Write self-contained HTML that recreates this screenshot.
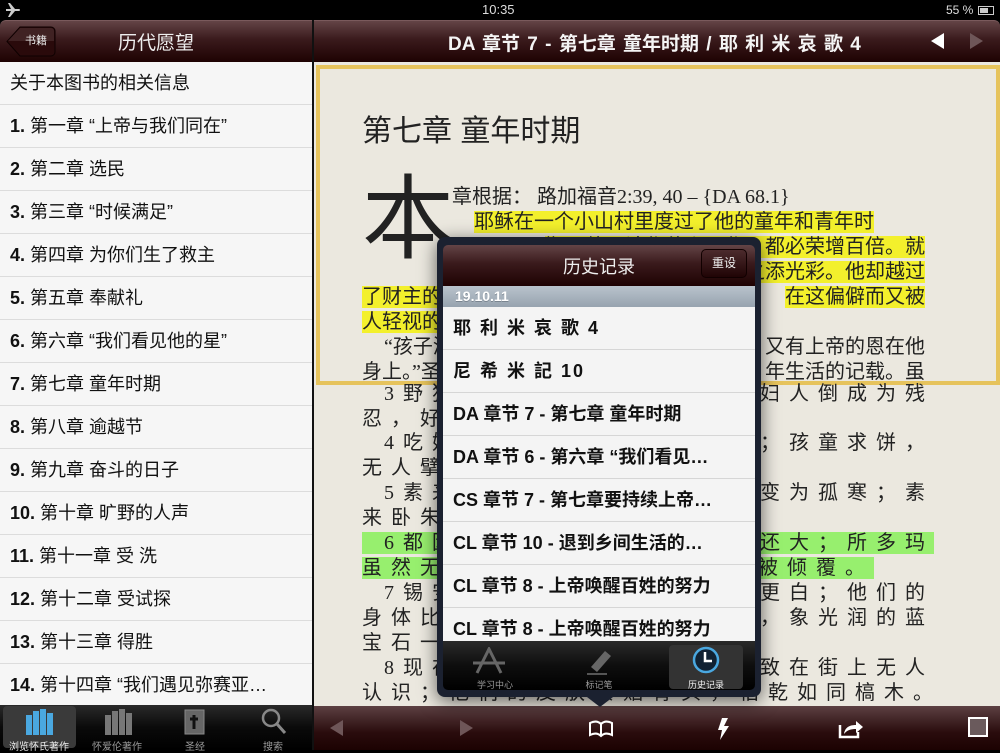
<!DOCTYPE html>
<html><head><meta charset="utf-8">
<style>
*{margin:0;padding:0;box-sizing:border-box}
body{width:1000px;height:750px;overflow:hidden;background:#000;font-family:"Liberation Sans","Noto Sans CJK SC",sans-serif;position:relative}
.abs{position:absolute}
.status{left:0;top:0;width:1000px;height:20px;background:#000;color:#ddd;font-size:13px}
.hdr{top:20px;height:42px;background:linear-gradient(#634446,#3a1a1c 45%,#1e0202);border-top:1px solid #7a5a5c}
.left{left:0;top:62px;width:312px;height:643px;background:#f6f6f6}
.row{position:absolute;left:0;width:312px;height:43px;border-bottom:1px solid #dcdcdc;font-size:18px;color:#111;padding-left:10px;line-height:42px;white-space:nowrap}
.content{left:314px;top:62px;width:686px;height:644px;background:#ebe8df}
.t{position:absolute;font-size:20px;color:#222;white-space:nowrap;font-family:"Liberation Serif","Noto Sans CJK SC",sans-serif;line-height:24px}
.y{background:#f3f02c}
.g{background:#97ef6e}
.sp{letter-spacing:9px}
.r{right:75px}
.sp.r{right:66px}
.tb{left:314px;top:706px;width:686px;height:44px;background:linear-gradient(#5c4042,#2a0c0d 60%,#1c0202)}
.ltab{left:0;top:705px;width:312px;height:45px;background:linear-gradient(#2a2a2a,#0a0a0a 50%,#000)}
.tl{position:absolute;font-size:10px;color:#999;width:78px;text-align:center;top:33px}
.pop{left:437px;top:237px;width:324px;height:460px;background:#1b2130;border-radius:8px;box-shadow:0 4px 18px rgba(0,0,0,.6)}
.pr{position:absolute;left:6px;width:312px;height:43px;background:#f4f4f4;border-bottom:1px solid #d6d6d6;font-size:18px;font-weight:bold;color:#111;padding-left:10px;line-height:42px;white-space:nowrap}
</style></head><body>
<div class="abs status">
<svg class="abs" style="left:5px;top:3px" width="16" height="14" viewBox="0 0 16 14"><path d="M1 6h5L3 0h2l5 6h4a1 1 0 010 2h-4l-5 6H3l3-6H1z" fill="#ccc"/></svg>
<div class="abs" style="left:482px;top:2px;font-size:13px">10:35</div>
<div class="abs" style="left:946px;top:3px;font-size:12px">55 %</div>
<div class="abs" style="left:978px;top:6px;width:16px;height:9px;border:1px solid #ccc"><div style="width:8px;height:5px;margin:1px;background:#ccc"></div></div>
</div>
<div class="abs hdr" style="left:0;width:312px;border-top-left-radius:6px"></div>
<svg class="abs" style="left:6px;top:26px" width="50" height="31"><path d="M14 1H45a4 4 0 014 4v21a4 4 0 01-4 4H14L1 15.5z" fill="#2a0a0b" stroke="#0e0000"/><path d="M14 2H45a3 3 0 013 3v10H2z" fill="#4a2c2e" opacity=".7"/></svg>
<div class="abs" style="left:18px;top:27px;width:36px;height:29px;color:#eee;font-size:11px;line-height:29px;text-align:center">书籍</div>
<div class="abs" style="left:0;width:312px;top:28px;text-align:center;color:#eee;font-size:19px">历代愿望</div>
<div class="abs hdr" style="left:314px;width:686px;border-top-right-radius:6px"></div>
<div class="abs" style="left:448px;top:29px;color:#f4f4f4;font-size:19px;font-weight:bold;white-space:nowrap;word-spacing:2px">DA 章节 7 - 第七章 童年时期 / 耶 利 米 哀 歌 4</div>
<div class="abs" style="left:931px;top:33px;width:0;height:0;border-top:8px solid transparent;border-bottom:8px solid transparent;border-right:13px solid #fff"></div>
<div class="abs" style="left:970px;top:33px;width:0;height:0;border-top:8px solid transparent;border-bottom:8px solid transparent;border-left:13px solid #6e5658"></div>
<div class="abs" style="left:312px;top:20px;width:2px;height:730px;background:#111"></div>

<div class="abs left">
<div class="row" style="top:0">关于本图书的相关信息</div>
<div class="row" style="top:43px"><b>1.</b> 第一章 “上帝与我们同在”</div>
<div class="row" style="top:86px"><b>2.</b> 第二章 选民</div>
<div class="row" style="top:129px"><b>3.</b> 第三章 “时候满足”</div>
<div class="row" style="top:172px"><b>4.</b> 第四章 为你们生了救主</div>
<div class="row" style="top:215px"><b>5.</b> 第五章 奉献礼</div>
<div class="row" style="top:258px"><b>6.</b> 第六章 “我们看见他的星”</div>
<div class="row" style="top:301px"><b>7.</b> 第七章 童年时期</div>
<div class="row" style="top:344px"><b>8.</b> 第八章 逾越节</div>
<div class="row" style="top:387px"><b>9.</b> 第九章 奋斗的日子</div>
<div class="row" style="top:430px"><b>10.</b> 第十章 旷野的人声</div>
<div class="row" style="top:473px"><b>11.</b> 第十一章 受 洗</div>
<div class="row" style="top:516px"><b>12.</b> 第十二章 受试探</div>
<div class="row" style="top:559px"><b>13.</b> 第十三章 得胜</div>
<div class="row" style="top:602px;border:0"><b>14.</b> 第十四章 “我们遇见弥赛亚…</div>
</div>

<div class="abs ltab">
<div class="abs" style="left:3px;top:1px;width:73px;height:42px;background:#3a3a3a;border-radius:4px"></div>
<svg class="abs" style="left:25px;top:4px" width="30" height="26"><g fill="#4aa8e0"><rect x="1" y="6" width="6" height="20"/><rect x="8" y="2" width="6" height="24"/><rect x="15" y="0" width="6" height="26"/><rect x="22" y="4" width="6" height="22"/></g></svg>
<svg class="abs" style="left:104px;top:4px" width="30" height="26"><g fill="#777"><rect x="1" y="6" width="6" height="20"/><rect x="8" y="2" width="6" height="24"/><rect x="15" y="0" width="6" height="26"/><rect x="22" y="4" width="6" height="22"/></g></svg>
<svg class="abs" style="left:184px;top:4px" width="22" height="26"><rect x="1" y="1" width="19" height="24" fill="#666" stroke="#888"/><path d="M10 6v14M6 10h8" stroke="#111" stroke-width="3"/></svg>
<svg class="abs" style="left:261px;top:3px" width="26" height="28"><circle cx="10" cy="10" r="8" fill="none" stroke="#888" stroke-width="2.5"/><path d="M16 16l8 9" stroke="#888" stroke-width="3"/></svg>
<div class="tl" style="left:0;color:#eee">浏览怀氏著作</div>
<div class="tl" style="left:78px">怀爱伦著作</div>
<div class="tl" style="left:156px">圣经</div>
<div class="tl" style="left:234px">搜索</div>
</div>

<div class="abs content">
<div class="abs" style="left:2px;top:3px;width:684px;height:320px;border:4px solid #e6c35c"></div>
<div class="t" style="left:48px;top:52px;font-size:30px;line-height:36px;font-family:'Liberation Sans','Noto Sans CJK SC',sans-serif;color:#222">第七章 童年时期</div>
<div class="t" style="left:48px;top:108px;font-size:92px;line-height:100px;font-family:'Liberation Sans','Noto Sans CJK SC',sans-serif">本</div>
<div class="t" style="left:138px;top:123px">章根据： 路加福音2:39, 40 – {DA 68.1}</div>
<div class="t" style="left:160px;top:148px"><span class="y">耶稣在一个小山村里度过了他的童年和青年时</span></div>
<div class="t r" style="top:173px"><span class="y">期。他无论作什么工作，都必荣增百倍。就</span></div>
<div class="t r" style="top:198px"><span class="y">是天上的光彩也为之添光彩。他却越过</span></div>
<div class="t" style="left:48px;top:223px"><span class="y">了财主的家</span></div>
<div class="t r" style="top:223px"><span class="y">在这偏僻而又被</span></div>
<div class="t" style="left:48px;top:248px"><span class="y">人轻视的拿撒勒居住。</span></div>
<div class="t" style="left:70px;top:273px">“孩子渐渐长大</div>
<div class="t r" style="top:273px">又有上帝的恩在他</div>
<div class="t" style="left:48px;top:298px">身上。”圣经</div>
<div class="t r" style="top:298px">年生活的记载。虽</div>
<div class="t sp" style="left:70px;top:320px">3野狗尚且</div>
<div class="t sp r" style="top:320px">的妇人倒成为残</div>
<div class="t sp" style="left:48px;top:345px">忍，好像曠野的鸵鸟</div>
<div class="t sp" style="left:70px;top:369px">4吃奶孩子</div>
<div class="t sp r" style="top:369px">膛；孩童求饼，</div>
<div class="t sp" style="left:48px;top:394px">无人擘给他们。</div>
<div class="t sp" style="left:70px;top:419px">5素来吃美</div>
<div class="t sp r" style="top:419px">上变为孤寒；素</div>
<div class="t sp" style="left:48px;top:444px">来卧朱红褥子的</div>
<div class="t sp" style="left:48px;top:469px"><span class="g" style="padding-left:22px">6都因我众民</span></div>
<div class="t sp r" style="top:469px;right:66px"><span class="g">罪还大；所多玛</span></div>
<div class="t sp" style="left:48px;top:494px"><span class="g">虽然无人加手</span></div>
<div class="t sp" style="top:494px;right:126px"><span class="g">被倾覆。</span></div>
<div class="t sp" style="left:70px;top:519px">7锡安的贵</div>
<div class="t sp r" style="top:519px">奶更白；他们的</div>
<div class="t sp" style="left:48px;top:544px">身体比红宝</div>
<div class="t sp r" style="top:544px">，象光润的蓝</div>
<div class="t sp" style="left:48px;top:569px">宝石一样。</div>
<div class="t sp" style="left:70px;top:594px">8现在他们</div>
<div class="t sp r" style="top:594px">以致在街上无人</div>
<div class="t sp" style="left:48px;top:619px">认识；他们的皮肤紧贴骨头，枯乾如同槁木。</div>
</div>

<div class="abs tb">
<div class="abs" style="left:16px;top:14px;border-top:8px solid transparent;border-bottom:8px solid transparent;border-right:13px solid #6e5658"></div>
<div class="abs" style="left:146px;top:14px;border-top:8px solid transparent;border-bottom:8px solid transparent;border-left:13px solid #6e5658"></div>
<svg class="abs" style="left:274px;top:14px" width="26" height="18"><path d="M2 3c4-2 8-2 11 1c3-3 7-3 11-1v12c-4-2-8-2-11 1c-3-3-7-3-11-1z M13 4v12" fill="none" stroke="#fff" stroke-width="2"/></svg>
<svg class="abs" style="left:402px;top:12px" width="14" height="22"><path d="M6 0h6l-4 8h5L4 22l2-10H2z" fill="#fff"/></svg>
<svg class="abs" style="left:524px;top:11px" width="26" height="22"><path d="M2 8v12h18v-5" fill="none" stroke="#fff" stroke-width="2.5"/><path d="M6 17c1-7 6-9 12-9V4l7 6-7 6v-4c-5 0-9 1-12 5z" fill="#fff"/></svg>
<div class="abs" style="left:654px;top:11px;width:20px;height:20px;border:2px solid #fff;background:#6a5a5c"></div>
</div>

<div class="abs pop">
<div class="abs" style="left:6px;top:8px;width:312px;height:41px;background:linear-gradient(#634446,#3a1a1c 45%,#1e0202);border-radius:5px 5px 0 0"></div>
<div class="abs" style="left:6px;top:16px;width:312px;text-align:center;color:#eee;font-size:18px">历史记录</div>
<div class="abs" style="left:264px;top:12px;width:46px;height:29px;background:linear-gradient(#4c2b2d,#200405);border:1px solid #110000;border-radius:5px;color:#eee;font-size:12px;text-align:center;line-height:27px">重设</div>
<div class="abs" style="left:6px;top:49px;width:312px;height:21px;background:linear-gradient(#b9c3cc,#97a3af);color:#fff;font-size:14px;font-weight:bold;padding-left:12px;line-height:21px;text-shadow:0 1px 0 #7a8590">19.10.11</div>
<div class="pr" style="top:70px;letter-spacing:2px">耶 利 米 哀 歌 4</div>
<div class="pr" style="top:113px;letter-spacing:2px">尼 希 米 記 10</div>
<div class="pr" style="top:156px">DA 章节 7 - 第七章 童年时期</div>
<div class="pr" style="top:199px">DA 章节 6 - 第六章 “我们看见…</div>
<div class="pr" style="top:242px">CS 章节 7 - 第七章要持续上帝…</div>
<div class="pr" style="top:285px">CL 章节 10 - 退到乡间生活的…</div>
<div class="pr" style="top:328px">CL 章节 8 - 上帝唤醒百姓的努力</div>
<div class="pr" style="top:371px;height:33px;overflow:hidden;border:0">CL 章节 8 - 上帝唤醒百姓的努力</div>
<div class="abs" style="left:6px;top:404px;width:312px;height:49px;background:linear-gradient(#2a2a2a,#0e0e0e 50%,#000);border-radius:0 0 5px 5px"></div>
<div class="abs" style="left:232px;top:408px;width:74px;height:44px;background:#333;border-radius:4px"></div>
<svg class="abs" style="left:34px;top:410px" width="36" height="28"><path d="M6 26L18 2L30 26M2 16h32" fill="none" stroke="#666" stroke-width="3"/></svg>
<svg class="abs" style="left:148px;top:410px" width="30" height="28"><path d="M6 20L20 4l6 5L12 25z" fill="#666"/><path d="M2 27h20" stroke="#555" stroke-width="2"/></svg>
<svg class="abs" style="left:254px;top:408px" width="30" height="30"><circle cx="15" cy="15" r="12" fill="#123" stroke="#4aa8e0" stroke-width="2.5"/><path d="M14 7v9h7" fill="none" stroke="#fff" stroke-width="2.5"/></svg>
<div class="abs" style="left:6px;top:441px;width:104px;text-align:center;font-size:9px;color:#999">学习中心</div>
<div class="abs" style="left:110px;top:441px;width:104px;text-align:center;font-size:9px;color:#999">标记笔</div>
<div class="abs" style="left:232px;top:441px;width:74px;text-align:center;font-size:9px;color:#eee">历史记录</div>
</div>
<div class="abs" style="left:587px;top:697px;width:0;height:0;border-left:13px solid transparent;border-right:13px solid transparent;border-top:10px solid #1b2130"></div>
</body></html>
